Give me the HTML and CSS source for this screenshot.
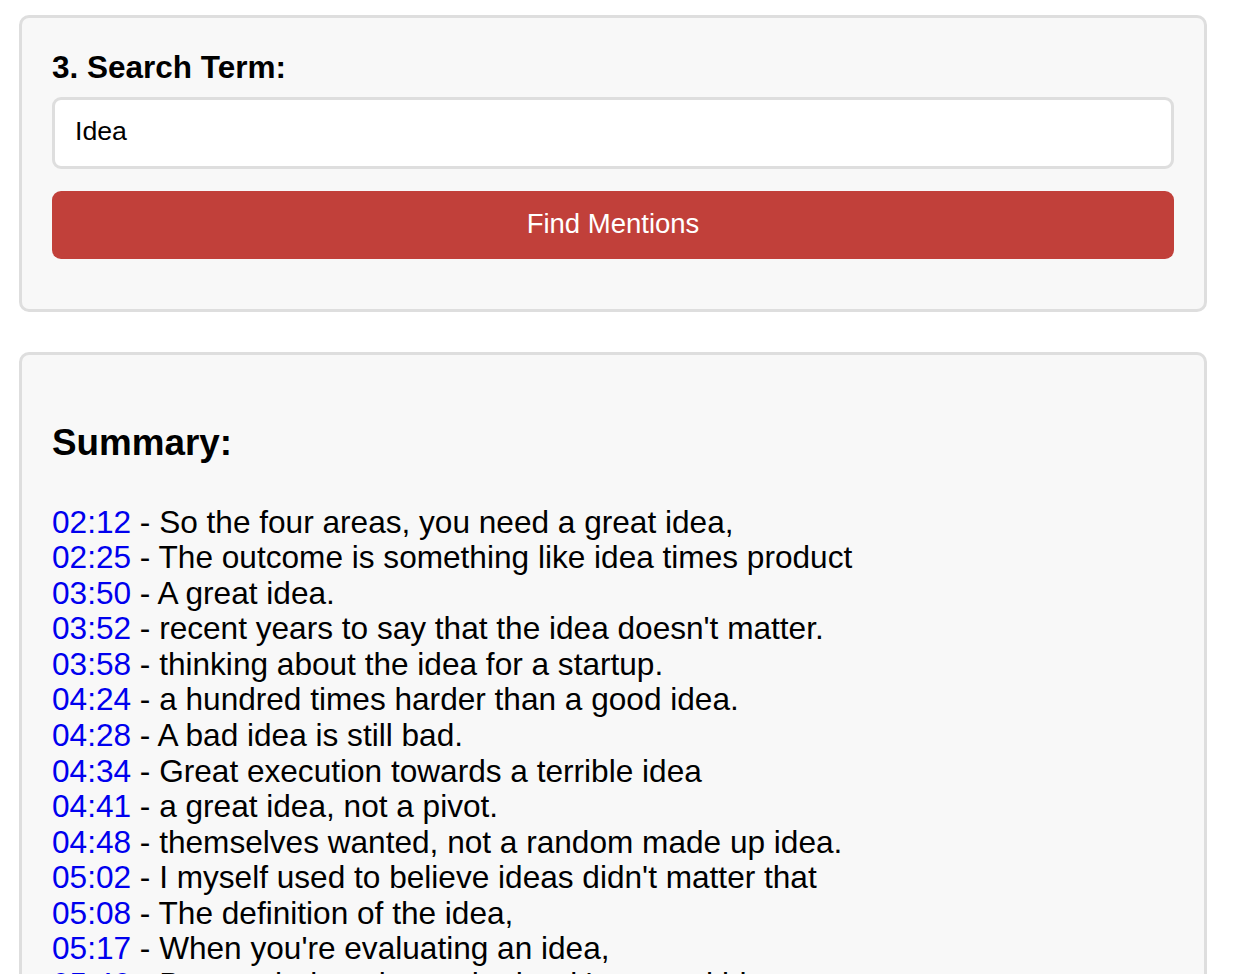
FILE: index.html
```html
<!DOCTYPE html>
<html lang="en">
<head>
<meta charset="utf-8">
<title>Find Mentions</title>
<link rel="stylesheet" href="styles.css">
</head>
<body>
<div class="page">
  <section class="card card-form">
    <label class="field-label" for="term">3. Search Term:</label>
    <input class="field-input" id="term" type="text" value="Idea">
    <button class="btn-primary" type="button">Find Mentions</button>
  </section>

  <section class="card card-summary">
    <h3 class="summary-title">Summary:</h3>
    <div class="mentions">
      <div class="mention"><a class="ts">02:12</a> - So the four areas, you need a great idea,</div>
      <div class="mention"><a class="ts">02:25</a> - The outcome is something like idea times product</div>
      <div class="mention"><a class="ts">03:50</a> - A great idea.</div>
      <div class="mention"><a class="ts">03:52</a> - recent years to say that the idea doesn't matter.</div>
      <div class="mention"><a class="ts">03:58</a> - thinking about the idea for a startup.</div>
      <div class="mention"><a class="ts">04:24</a> - a hundred times harder than a good idea.</div>
      <div class="mention"><a class="ts">04:28</a> - A bad idea is still bad.</div>
      <div class="mention"><a class="ts">04:34</a> - Great execution towards a terrible idea</div>
      <div class="mention"><a class="ts">04:41</a> - a great idea, not a pivot.</div>
      <div class="mention"><a class="ts">04:48</a> - themselves wanted, not a random made up idea.</div>
      <div class="mention"><a class="ts">05:02</a> - I myself used to believe ideas didn't matter that</div>
      <div class="mention"><a class="ts">05:08</a> - The definition of the idea,</div>
      <div class="mention"><a class="ts">05:17</a> - When you're evaluating an idea,</div>
      <div class="mention"><a class="ts">05:40</a> - Be wondering about whether it's a good idea</div>
    </div>
  </section>
</div>
</body>
</html>
```

FILE: styles.css
```css
html, body {
  margin: 0;
  padding: 0;
  background: #ffffff;
}

body {
  font-family: "Liberation Sans", Arial, Helvetica, sans-serif;
  color: #000;
  overflow: hidden;
}

.page {
  padding: 15px 27px 0 19px;
  display: flex;
  flex-direction: column;
  gap: 40px;
}

.card {
  background: #f8f8f8;
  border: 3px solid #dedede;
  border-radius: 10px;
  padding: 30px;
}

.card-form {
  display: flex;
  flex-direction: column;
  padding-bottom: 50px;
}

.field-label {
  display: block;
  font-size: 31.5px;
  font-weight: bold;
  line-height: 37px;
  padding-top: 1px;
  margin-bottom: 11px;
}

.field-input {
  box-sizing: border-box;
  height: 72px;
  width: 100%;
  border: 3px solid #dedede;
  border-radius: 9px;
  background: #fff;
  padding: 0 20px 3px;
  font-family: "Liberation Sans", Arial, sans-serif;
  font-size: 26.7px;
  color: #000;
  outline: none;
  margin: 0;
}

.btn-primary {
  margin-top: 22px;
  height: 68px;
  width: 100%;
  border: none;
  border-radius: 9px;
  background: #c1403a;
  color: #fff;
  font-family: "Liberation Sans", Arial, sans-serif;
  font-size: 27.5px;
  padding: 0 0 2px;
  cursor: pointer;
}

.card-summary {
  padding-bottom: 60px;
}

.summary-title {
  font-size: 36.8px;
  font-weight: bold;
  margin: 37px 0 40px;
  line-height: 42.5px;
}

.mentions {
  font-size: 31.6px;
  line-height: 35.58px;
}

.mention {
  white-space: nowrap;
}

.ts {
  color: #0000ee;
  text-decoration: none;
  cursor: pointer;
}
```
